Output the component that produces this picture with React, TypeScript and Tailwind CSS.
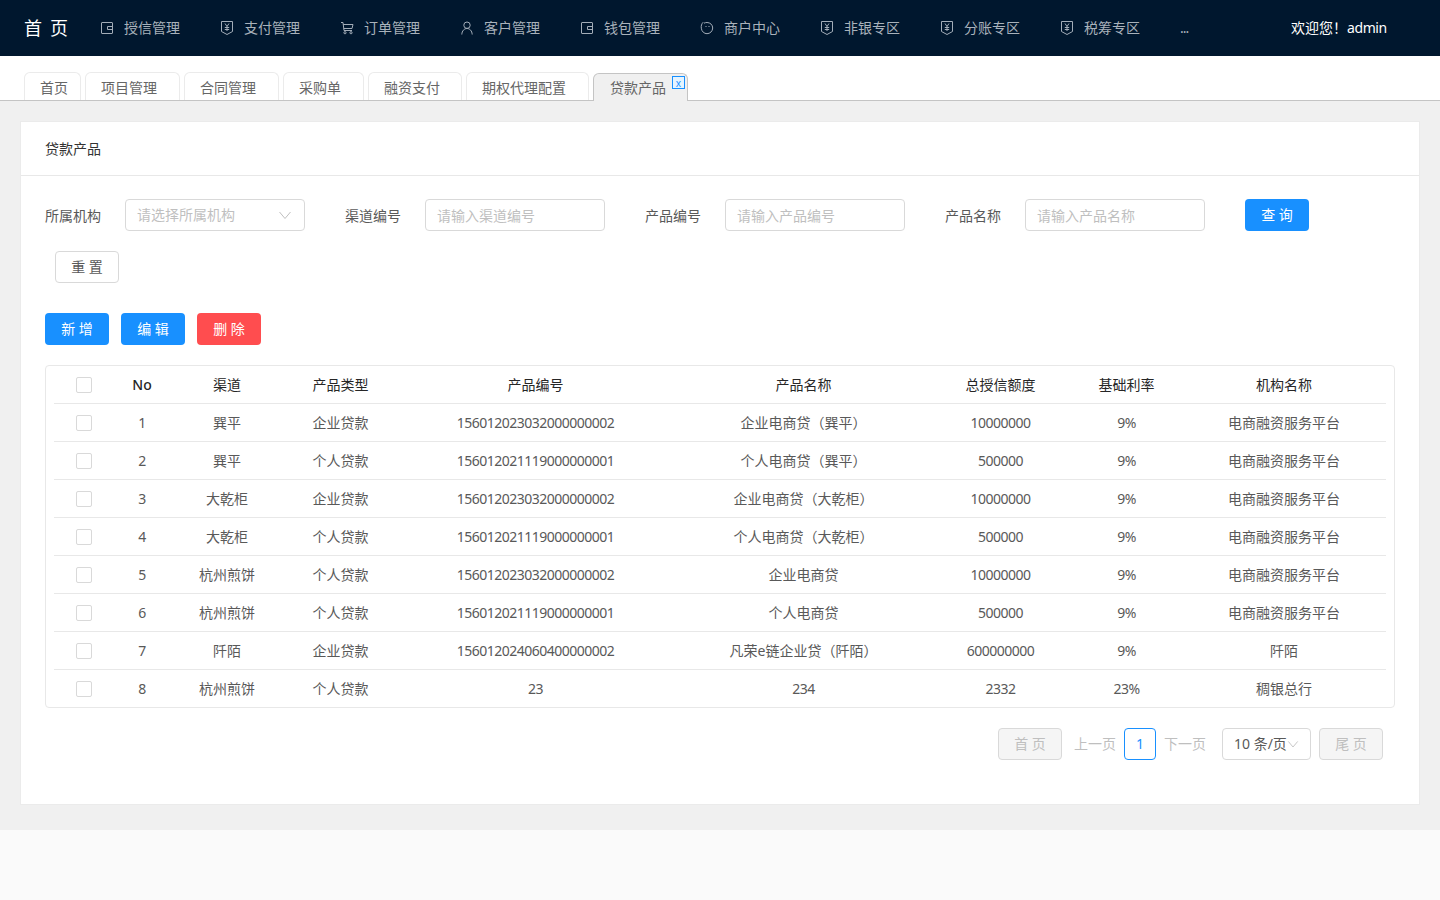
import React from "react";

const FONT = "font-['Noto_Sans','Noto_Sans_CJK_SC',sans-serif]";

function WalletIcon() {
  return (
    <svg width="14" height="14" viewBox="0 0 14 14" fill="none" stroke="#a3adb8" strokeWidth="1">
      <rect x="1.5" y="1.5" width="11" height="11" rx="0.5" />
      <path d="M12.5 5.5H7.5V8.5H12.5" />
    </svg>
  );
}

function ShieldIcon() {
  return (
    <svg width="14" height="16" viewBox="0 0 14 16" fill="none" stroke="#a3adb8" strokeWidth="1">
      <path d="M1.5 1.5H12.5V11.5L7 14.5L1.5 11.5Z" />
      <path d="M5 3.5L7 6.5L9 3.5M7 6.5V11M4.8 7.5H9.2M4.8 9.5H9.2" />
    </svg>
  );
}

function CartIcon() {
  return (
    <svg width="14" height="14" viewBox="0 0 14 14" fill="none" stroke="#a3adb8" strokeWidth="1">
      <path d="M1 1.5H3L4 9.5H12M3.2 3.5H13L12 7.5H3.7" />
      <circle cx="5" cy="11.7" r="1.1" />
      <circle cx="11" cy="11.7" r="1.1" />
    </svg>
  );
}

function UserIcon() {
  return (
    <svg width="14" height="14" viewBox="0 0 14 14" fill="none" stroke="#a3adb8" strokeWidth="1">
      <circle cx="7" cy="4.2" r="3.2" />
      <path d="M1.8 13.5C2 9.8 4.2 7.5 7 7.5C9.8 7.5 12 9.8 12.2 13.5" />
    </svg>
  );
}

function MerchantIcon() {
  return (
    <svg width="14" height="14" viewBox="0 0 14 14" fill="none" stroke="#a3adb8" strokeWidth="1">
      <path d="M3.2 1.2C1.5 3 1 4.8 1.3 7.2C1.7 10.6 4.2 12.7 7 12.7C10 12.7 12.7 10.2 12.7 7C12.7 3.9 10.2 1.5 7 1.5C6 1.5 5 1.7 4 2.2" />
      <path d="M5.5 5.5H6.5M8.5 5.5H9.5" />
    </svg>
  );
}

function Chevron({ size = 14, color = "#bfbfbf" }: { size?: number; color?: string }) {
  return (
    <svg width={size} height={size} viewBox="0 0 14 14" fill="none" stroke={color} strokeWidth="1">
      <path d="M1.5 4L7 10.5L12.5 4" />
    </svg>
  );
}

const navItems = [
  { label: "授信管理", icon: <WalletIcon /> },
  { label: "支付管理", icon: <ShieldIcon /> },
  { label: "订单管理", icon: <CartIcon /> },
  { label: "客户管理", icon: <UserIcon /> },
  { label: "钱包管理", icon: <WalletIcon /> },
  { label: "商户中心", icon: <MerchantIcon /> },
  { label: "非银专区", icon: <ShieldIcon /> },
  { label: "分账专区", icon: <ShieldIcon /> },
  { label: "税筹专区", icon: <ShieldIcon /> },
];

const tabs = [
  { label: "首页", w: "w-[57px]" },
  { label: "项目管理", w: "w-[95px]" },
  { label: "合同管理", w: "w-[95px]" },
  { label: "采购单", w: "w-[81px]" },
  { label: "融资支付", w: "w-[94px]" },
  { label: "期权代理配置", w: "w-[123px]" },
];

const filters = [
  { label: "渠道编号", placeholder: "请输入渠道编号" },
  { label: "产品编号", placeholder: "请输入产品编号" },
  { label: "产品名称", placeholder: "请输入产品名称" },
];

const rows = [
  ["1", "巽平", "企业贷款", "156012023032000000002", "企业电商贷（巽平）", "10000000", "9%", "电商融资服务平台"],
  ["2", "巽平", "个人贷款", "156012021119000000001", "个人电商贷（巽平）", "500000", "9%", "电商融资服务平台"],
  ["3", "大乾柜", "企业贷款", "156012023032000000002", "企业电商贷（大乾柜）", "10000000", "9%", "电商融资服务平台"],
  ["4", "大乾柜", "个人贷款", "156012021119000000001", "个人电商贷（大乾柜）", "500000", "9%", "电商融资服务平台"],
  ["5", "杭州煎饼", "个人贷款", "156012023032000000002", "企业电商贷", "10000000", "9%", "电商融资服务平台"],
  ["6", "杭州煎饼", "个人贷款", "156012021119000000001", "个人电商贷", "500000", "9%", "电商融资服务平台"],
  ["7", "阡陌", "企业贷款", "156012024060400000002", "凡荣e链企业贷（阡陌）", "600000000", "9%", "阡陌"],
  ["8", "杭州煎饼", "个人贷款", "23", "234", "2332", "23%", "稠银总行"],
];

const headers = ["No", "渠道", "产品类型", "产品编号", "产品名称", "总授信额度", "基础利率", "机构名称"];

const GRID = "grid grid-cols-[60px_56px_114px_113px_277px_259px_135px_117px_198px] items-center";

function Checkbox() {
  return (
    <div className="flex justify-center">
      <div className="w-4 h-4 bg-white border border-[#d9d9d9] rounded-[2px]" />
    </div>
  );
}

function Btn({ children, color }: { children: React.ReactNode; color: string }) {
  return <button className={`w-16 h-8 rounded-[4px] text-white text-sm ${color}`}>{children}</button>;
}

function DisabledBtn({ children }: { children: React.ReactNode }) {
  return (
    <button className="w-16 h-8 rounded-[4px] bg-[#f5f5f5] border border-[#d9d9d9] text-[#bfbfbf] text-sm">
      {children}
    </button>
  );
}

export default function App() {
  return (
    <div className={`${FONT} min-h-[900px] bg-[#fafafa] text-sm text-[#595959]`}>
      <header className="h-14 bg-[#00172e] flex items-center pl-6">
        <div className="w-[76px] flex gap-2 text-white text-lg">
          <span>首</span>
          <span>页</span>
        </div>
        {navItems.map((item) => (
          <div key={item.label} className="w-[120px] flex items-center text-[#a9b2bb]">
            <span className="w-6 flex">{item.icon}</span>
            <span>{item.label}</span>
          </div>
        ))}
        <div className="w-[111px] text-[#a9b2bb] leading-none tracking-[-1px]">...</div>
        <div className="text-white">
          欢迎您！<span className="tracking-[-0.4px]">admin</span>
        </div>
      </header>

      <nav className="h-[45px] bg-white border-b border-[#c4c4c4] flex items-end pl-6 gap-1">
        {tabs.map((tab) => (
          <div
            key={tab.label}
            className={`${tab.w} h-7 pl-[15px] pt-[5px] bg-white border border-b-0 border-[#ebebeb] rounded-t-md text-[#666666]`}
          >
            {tab.label}
          </div>
        ))}
        <div className="relative w-[95px] h-7 -mb-px pl-4 pt-1 bg-[#f0f0f0] border border-b-0 border-[#c4c4c4] rounded-t-md text-[#666666]">
          贷款产品
          <span className="absolute top-[2px] right-[2px] w-[13px] h-[13px] border border-[#1890ff] bg-[#e6f4ff] flex items-center justify-center text-[#1890ff] text-[10px] leading-none">
            x
          </span>
        </div>
      </nav>

      <main className="h-[729px] bg-[#f0f0f0] px-5 pt-5">
        <section className="h-[684px] bg-white border border-[#ebebeb]">
          <div className="h-[54px] flex items-center pl-6 text-[#333333] border-b border-[#e8e8e8]">贷款产品</div>

          <div className="px-6 pt-[23px]">
            <div className="flex items-center gap-10">
              <div className="w-[260px] flex items-center">
                <span className="w-20 pt-[2px]">所属机构</span>
                <div className="w-[180px] h-8 pl-[11px] pr-3 flex items-center justify-between border border-[#d9d9d9] rounded-[4px] text-[#bfbfbf]">
                  请选择所属机构
                  <Chevron />
                </div>
              </div>
              {filters.map((f) => (
                <div key={f.label} className="w-[260px] flex items-center">
                  <span className="w-20 pt-[2px]">{f.label}</span>
                  <div className="w-[180px] h-8 pl-[11px] pt-[2px] flex items-center border border-[#d9d9d9] rounded-[4px] text-[#bfbfbf]">
                    {f.placeholder}
                  </div>
                </div>
              ))}
              <Btn color="bg-[#1890ff]">查 询</Btn>
            </div>
            <div className="mt-5 ml-[10px]">
              <button className="w-16 h-8 rounded-[4px] bg-white border border-[#d9d9d9] text-[#595959] text-sm">重 置</button>
            </div>

            <div className="mt-[30px] flex gap-3">
              <Btn color="bg-[#1890ff]">新 增</Btn>
              <Btn color="bg-[#1890ff]">编 辑</Btn>
              <Btn color="bg-[#ff4d4f]">删 除</Btn>
            </div>

            <div className="mt-5 h-[343px] border border-[#e8e8e8] rounded-[4px] px-2 text-center">
              <div className={`${GRID} h-[38px] border-b border-[#e8e8e8] text-[#262626]`}>
                <Checkbox />
                {headers.map((h, i) => (
                  <div key={h} className={i === 0 ? "font-medium" : ""}>
                    {h}
                  </div>
                ))}
              </div>
              {rows.map((row, r) => (
                <div
                  key={row[0]}
                  className={`${GRID} h-[38px] ${r < rows.length - 1 ? "border-b border-[#e8e8e8]" : ""}`}
                >
                  <Checkbox />
                  {row.map((cell, i) => (
                    <div key={i} className={/^[\d%]+$/.test(cell) ? "tracking-[-0.5px]" : ""}>
                      {cell}
                    </div>
                  ))}
                </div>
              ))}
            </div>

            <div className="mt-5 flex items-center justify-end pr-3">
              <DisabledBtn>首 页</DisabledBtn>
              <span className="ml-3 text-[#bfbfbf]">上一页</span>
              <span className="ml-2 w-8 h-8 flex items-center justify-center border border-[#1890ff] rounded-[4px] text-[#1890ff]">1</span>
              <span className="ml-2 text-[#bfbfbf]">下一页</span>
              <div className="ml-4 w-[89px] h-8 pl-[11px] flex items-center border border-[#d9d9d9] rounded-[4px] text-[#595959]">
                10 条/页
                <Chevron size={12} />
              </div>
              <div className="ml-2">
                <DisabledBtn>尾 页</DisabledBtn>
              </div>
            </div>
          </div>
        </section>
      </main>
    </div>
  );
}
